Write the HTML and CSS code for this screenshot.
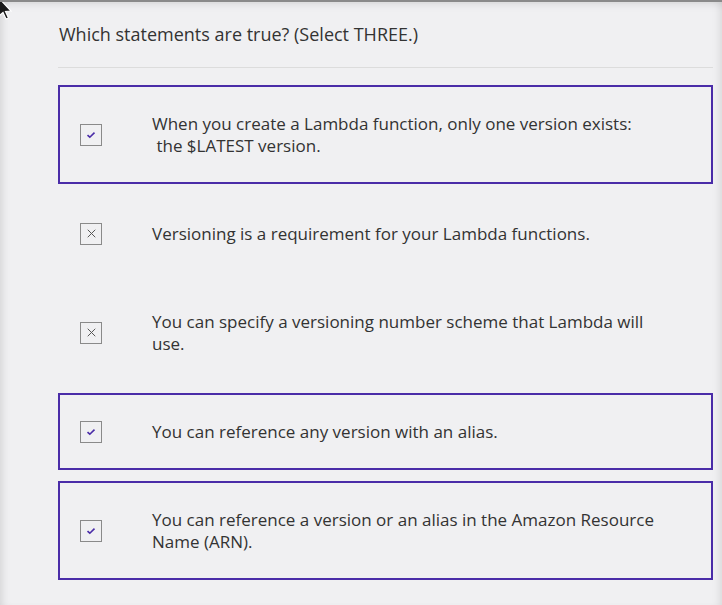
FILE: index.html
```html
<!DOCTYPE html>
<html lang="en">
<head>
<meta charset="utf-8">
<title>Question</title>
<link rel="stylesheet" href="styles.css">
</head>
<body>
<div class="frame">
  <main class="quiz">
    <h1 class="question">Which statements are true? (Select THREE.)</h1>
    <ul class="options">
      <li class="option selected">
        <span class="box"><svg viewBox="0 0 10 8" class="mark"><path d="M1.5 4.2 L3.8 6.2 L8.5 1.6" /></svg></span>
        <span class="label">When you create a Lambda function, only one version exists:<br>&nbsp;the $LATEST version.</span>
      </li>
      <li class="option">
        <span class="box"><svg viewBox="0 0 10 10" class="cross"><path d="M0.8 0.8 L9.2 9.2 M9.2 0.8 L0.8 9.2" /></svg></span>
        <span class="label">Versioning is a requirement for your Lambda functions.</span>
      </li>
      <li class="option">
        <span class="box"><svg viewBox="0 0 10 10" class="cross"><path d="M0.8 0.8 L9.2 9.2 M9.2 0.8 L0.8 9.2" /></svg></span>
        <span class="label">You can specify a versioning number scheme that Lambda will<br>use.</span>
      </li>
      <li class="option selected">
        <span class="box"><svg viewBox="0 0 10 8" class="mark"><path d="M1.5 4.2 L3.8 6.2 L8.5 1.6" /></svg></span>
        <span class="label">You can reference any version with an alias.</span>
      </li>
      <li class="option selected">
        <span class="box"><svg viewBox="0 0 10 8" class="mark"><path d="M1.5 4.2 L3.8 6.2 L8.5 1.6" /></svg></span>
        <span class="label">You can reference a version or an alias in the Amazon Resource<br>Name (ARN).</span>
      </li>
    </ul>
  </main>
  <svg class="cursor" viewBox="0 0 14 20" width="14" height="20"><path d="M-3 -6 L11 9 L5.5 9.5 L8.5 16 L6 17 L3 10.5 L-1 14 Z" fill="#1a1a1a" stroke="#fff" stroke-width="1.2"/></svg>
</div>
</body>
</html>
```

FILE: styles.css
```css
html, body {
  margin: 0;
  padding: 0;
}
body {
  background: #f0f0f2;
  font-family: "Open Sans", "Noto Sans", sans-serif;
  color: #333;
}
.frame {
  position: relative;
  width: 722px;
  height: 605px;
  overflow: hidden;
  border-top: 2px solid #8a8a8a;
  box-sizing: border-box;
  box-shadow: inset 8px 0 8px -6px rgba(0,0,0,0.12), inset -8px 0 8px -6px rgba(0,0,0,0.10), inset 0 8px 8px -6px rgba(0,0,0,0.10);
  background: #f0f0f2;
}
.quiz {
  margin-left: 58px;
  width: 655px;
}
.question {
  margin: 0;
  padding: 21px 1px 22px;
  font-size: 18px;
  line-height: 22px;
  font-weight: 400;
  border-bottom: 1px solid #dcdcdc;
}
.options {
  list-style: none;
  margin: 17px 0 0;
  padding: 0;
  display: flex;
  flex-direction: column;
  gap: 11px;
}
.option {
  display: flex;
  align-items: center;
  border: 2px solid transparent;
  padding: 25.5px 0 25.5px 20px;
  font-size: 17px;
  line-height: 22px;
}
.option.selected {
  border-color: #4a2ca8;
}
.box {
  flex: none;
  width: 20px;
  height: 20px;
  border: 1px solid #8a8a8a;
  display: flex;
  align-items: center;
  justify-content: center;
  margin-right: 50px;
}
.mark {
  width: 10px;
  height: 8px;
}
.mark path {
  fill: none;
  stroke: #4a2ca8;
  stroke-width: 1.6;
}
.cross {
  width: 9px;
  height: 9px;
}
.cross path {
  fill: none;
  stroke: #555;
  stroke-width: 1.1;
}
.label {
  display: block;
}
.cursor {
  position: absolute;
  left: 0;
  top: 0;
}
```
